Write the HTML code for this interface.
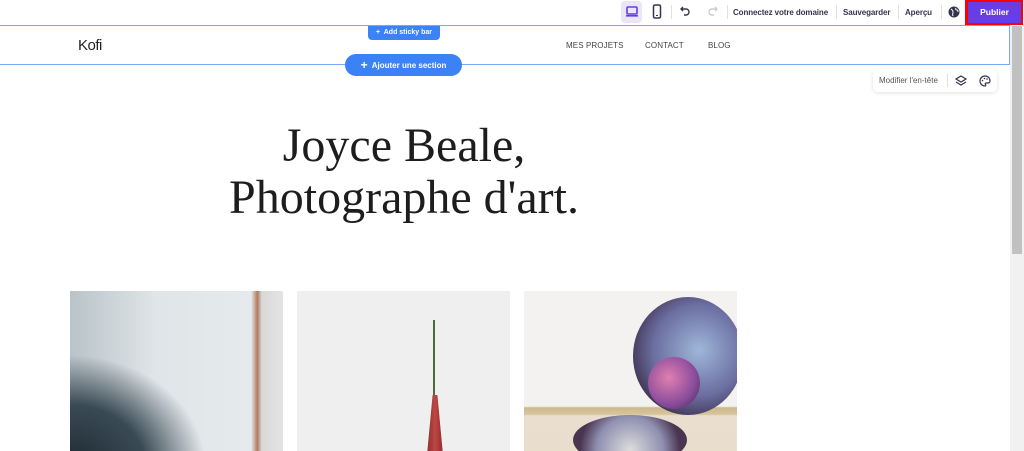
<!DOCTYPE html><html style="overflow:hidden"><head><meta charset="utf-8"><style>
*{margin:0;padding:0;box-sizing:border-box}
html,body{width:1024px;height:451px;overflow:hidden}
body{background:#fff;font-family:"Liberation Sans",sans-serif;position:relative}
.a{position:absolute}
.tb{font-size:8px;font-weight:bold;color:#36344d;top:8px;letter-spacing:-.1px;white-space:nowrap}
.sep{width:1px;height:14px;background:#e0e0e6;top:5px}
.nav{font-size:8px;color:#444;top:41px;letter-spacing:.1px}
.img{position:absolute;top:291px;width:213px;height:160px;overflow:hidden}
</style></head><body>
<div class="a" style="left:621px;top:1px;width:21px;height:22px;background:#ebe5fc;border-radius:4px"></div>
<svg class="a" style="left:625px;top:5px" width="14" height="13" viewBox="0 0 14 13"><rect x="2" y="2" width="10" height="7" rx="1" fill="none" stroke="#673de6" stroke-width="1.6"/><rect x="1" y="10" width="12" height="1.6" fill="#673de6"/></svg>
<svg class="a" style="left:652px;top:4px" width="10" height="15" viewBox="0 0 10 15"><rect x="1.5" y="1" width="7" height="13" rx="1.5" fill="none" stroke="#36344d" stroke-width="1.5"/><rect x="4" y="11" width="2" height="1" fill="#36344d"/></svg>
<div class="a sep" style="left:671px"></div>
<svg class="a" style="left:680px;top:6px" width="11" height="10" viewBox="0 0 11 10"><path d="M3 1L1 3l2 2M1 3h5a3 3 0 010 6H4" fill="none" stroke="#36344d" stroke-width="1.4"/></svg>
<svg class="a" style="left:707px;top:6px" width="11" height="10" viewBox="0 0 11 10"><path d="M8 1l2 2-2 2M10 3H5a3 3 0 000 6h2" fill="none" stroke="#ccc" stroke-width="1.4"/></svg>
<div class="a sep" style="left:727px"></div>
<div class="a tb" style="left:733px">Connectez votre domaine</div>
<div class="a sep" style="left:836px"></div>
<div class="a tb" style="left:843px">Sauvegarder</div>
<div class="a sep" style="left:898px"></div>
<div class="a tb" style="left:905px">Aperçu</div>
<div class="a sep" style="left:941px"></div>
<svg class="a" style="left:948px;top:6px" width="12" height="12" viewBox="0 0 12 12"><circle cx="6" cy="6" r="5.5" fill="#36344d"/><path d="M3 3c1 1 2 1 2 3s-1 2 0 4M8 2c-1 1 0 2 1 2s1 2 1 2" stroke="#fff" stroke-width="1" fill="none"/></svg>
<div class="a" style="left:965px;top:0;width:58px;height:25px;background:#f00"></div>
<div class="a" style="left:968px;top:2px;width:53px;height:21px;background:#673de6;color:#fff;font-size:8.5px;font-weight:bold;text-align:center;line-height:21px">Publier</div>
<div class="a" style="left:0;top:25px;width:1010px;height:40px;border:1px solid #7aa6f5;border-left:none"></div>
<div class="a" style="left:78px;top:37px;font-family:'Liberation Sans',sans-serif;font-size:15px;color:#222;letter-spacing:-.5px">Kofi</div>
<div class="a nav" style="left:566px">MES PROJETS</div>
<div class="a nav" style="left:645px">CONTACT</div>
<div class="a nav" style="left:708px">BLOG</div>
<div class="a" style="left:368px;top:26px;width:72px;height:14px;background:#3b82f6;border-radius:0 0 4px 4px;color:#fff;font-size:7px;font-weight:bold;line-height:14px;text-align:center">+&nbsp; Add sticky bar</div>
<div class="a" style="left:345px;top:54px;width:117px;height:22px;background:#3b82f6;border-radius:11px;color:#fff;font-size:8px;font-weight:bold;line-height:22px;text-align:center"><span style="font-size:12px;vertical-align:-1px">+</span>&nbsp; Ajouter une section</div>
<div class="a" style="left:873px;top:69px;width:124px;height:23px;background:#fff;border-radius:5px;box-shadow:0 1px 4px rgba(0,0,0,.12)"></div>
<div class="a" style="left:879px;top:76px;font-size:8px;color:#555">Modifier l'en-tête</div>
<div class="a" style="left:947px;top:74px;width:1px;height:13px;background:#e0e0e0"></div>
<svg class="a" style="left:955px;top:75px" width="12" height="12" viewBox="0 0 12 12"><path d="M6 1l5 3-5 3-5-3zM1 7l5 3 5-3" fill="none" stroke="#36344d" stroke-width="1.2"/></svg>
<svg class="a" style="left:979px;top:75px" width="12" height="12" viewBox="0 0 12 12"><path d="M6 1a5 5 0 100 10c1 0 1-1 .5-1.5S6 8 7 8h2a2 2 0 002-2c0-3-2-5-5-5z" fill="none" stroke="#36344d" stroke-width="1.2"/><circle cx="3.5" cy="5.5" r=".8" fill="#36344d"/><circle cx="5.5" cy="3.5" r=".8" fill="#36344d"/><circle cx="8" cy="4" r=".8" fill="#36344d"/></svg>
<div class="a" style="left:0;width:808px;top:120px;text-align:center;font-family:'Liberation Serif',serif;font-size:48px;line-height:52px;color:#1d1d1d;letter-spacing:0">Joyce Beale,<br>Photographe d'art.</div>
<div class="img" style="left:70px;background:radial-gradient(ellipse at 0% 110%,#1e2a33 0%,#3a4a55 25%,transparent 45%),linear-gradient(90deg,#b9c3c8 0%,#dfe5e8 40%,#e6eaec 85%,#b07a5c 88%,#d8d8d8 90%,#e4e4e4 100%)"></div>
<div class="img" style="left:297px;background:#efefef">
<div class="a" style="left:130px;top:104px;width:16px;height:60px;background:linear-gradient(90deg,#8d2f2f,#c04545,#8d2f2f);clip-path:polygon(35% 0,65% 0,100% 100%,0 100%)"></div>
<div class="a" style="left:136px;top:29px;width:2px;height:75px;background:#4a6a3a"></div>
</div>
<div class="img" style="left:524px;background:linear-gradient(180deg,#f3f2f0 0%,#f3f2f0 72%,#cdb98e 73%,#d8c49b 77%,#eadfcf 78%,#e9ddcc 100%)">
<div class="a" style="left:109px;top:6px;width:110px;height:118px;border-radius:50%;background:radial-gradient(circle at 60% 45%,#9fb7d8,#6a6da0 50%,#3b2c48 80%)"></div>
<div class="a" style="left:124px;top:66px;width:52px;height:52px;border-radius:50%;background:radial-gradient(circle at 40% 40%,#e07fb0,#8a4c9c 60%,#3b2c48)"></div>
<div class="a" style="left:49px;top:124px;width:114px;height:50px;border-radius:50%;background:radial-gradient(circle at 50% 70%,#ddd,#8f8fb0 50%,#4a3550 75%)"></div>
</div>
<div class="a" style="left:1010px;top:25px;width:14px;height:426px;background:#f1f1f1"></div>
<div class="a" style="left:1012px;top:26px;width:10px;height:228px;background:#c1c1c1"></div>
</body></html>
